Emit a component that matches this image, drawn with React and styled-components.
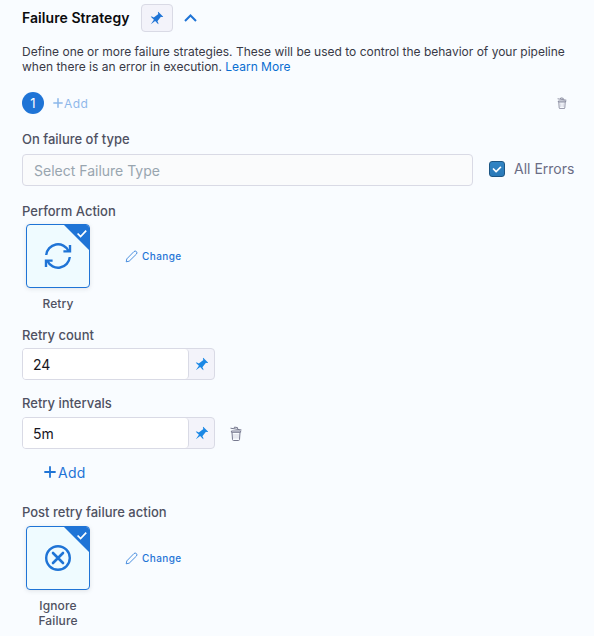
import React from 'react';
import styled, { createGlobalStyle } from 'styled-components';

const GlobalStyle = createGlobalStyle`
  *, *::before, *::after { box-sizing: border-box; }
  body {
    margin: 0;
    background: #fafcff;
    font-family: Inter, "Liberation Sans", sans-serif;
    color: #4f5162;
  }
  button, input { font-family: inherit; }
`;

const Panel = styled.main`
  width: 594px;
  height: 636px;
  overflow: hidden;
  padding: 4px 20px 0 22px;
  background: #f9fcff;
`;

const Header = styled.header`
  display: flex;
  align-items: center;
  height: 28px;
`;

const Title = styled.h2`
  margin: 0;
  width: 119px;
  font-size: 14px;
  line-height: 20px;
  font-weight: 600;
  letter-spacing: 0.06px;
  color: #0b0b0d;
  white-space: nowrap;
`;

const PinButton = styled.button`
  display: flex;
  align-items: center;
  justify-content: center;
  width: 32px;
  height: 28px;
  padding: 0;
  border: 1px solid #d9dae5;
  border-radius: 4px;
  background: #f3f3fa;
  color: #1f74d6;
`;

const Chevron = styled.svg`
  margin-left: 11px;
`;

const Description = styled.p`
  margin: 12px 0 0;
  font-size: 12px;
  line-height: 15px;
  color: #383946;
  white-space: nowrap;
`;

const Link = styled.a`
  color: #0a6ed1;
`;

const StrategyBar = styled.div`
  display: flex;
  align-items: center;
  height: 22px;
  margin-top: 18px;
  padding-right: 7px;
`;

const StepBadge = styled.span`
  width: 22px;
  height: 22px;
  border-radius: 50%;
  background: #1f74d6;
  color: #fff;
  font-size: 13px;
  line-height: 22px;
  text-align: center;
`;

const AddButton = styled.button`
  display: flex;
  align-items: center;
  gap: ${(p) => (p.$large ? 2 : 1)}px;
  margin: ${(p) => (p.$large ? '13px 0 0 22px' : '0 auto 0 9px')};
  padding: 0;
  border: 0;
  background: none;
  height: 20px;
  color: #1f74d6;
  opacity: ${(p) => (p.$large ? 1 : 0.5)};
  font-size: ${(p) => (p.$large ? 14 : 12)}px;
  letter-spacing: ${(p) => (p.$large ? 0.3 : 0.4)}px;
`;

const Label = styled.div`
  margin-top: ${(p) => p.$top}px;
  height: 16px;
  font-size: 13px;
  line-height: 16px;
  font-weight: 500;
  color: #4f5162;
  white-space: nowrap;
`;

const FieldRow = styled.div`
  display: flex;
  align-items: center;
  height: 32px;
  margin-top: ${(p) => p.$top}px;
`;

const TypeSelect = styled.div`
  flex: none;
  width: 451px;
  height: 32px;
  padding-left: 11px;
  border: 1px solid #d9dae5;
  border-radius: 4px;
  background: #fafbfc;
  color: #98a5af;
  font-size: 14px;
  line-height: 32px;
`;

const CheckLabel = styled.label`
  display: flex;
  align-items: center;
  gap: 9px;
  height: 20px;
  margin: -3px 0 0 16px;
  font-size: 14px;
  color: #6b6d85;
  white-space: nowrap;
`;

const CheckBox = styled.span`
  display: flex;
  width: 16px;
  height: 16px;
  border-radius: 3px;
  border: 1px solid #1d5684;
  background: linear-gradient(#3184c4, #2a79b8);
  color: #fff;
`;

const ActionRow = styled.div`
  display: flex;
  margin: ${(p) => p.$top}px 0 0 4px;
`;

const ActionChoice = styled.div`
  display: flex;
  flex-direction: column;
  align-items: center;
  width: 64px;
`;

const ActionTile = styled.div`
  position: relative;
  display: flex;
  align-items: center;
  justify-content: center;
  width: 64px;
  height: 64px;
  overflow: hidden;
  border: 1px solid #1f74d6;
  border-radius: 4px;
  background: #effbff;
  color: #1f74d6;
  box-shadow: 0 1px 4px rgba(96, 97, 112, 0.16);
`;

const Corner = styled.svg`
  position: absolute;
  top: -1px;
  right: -1px;
`;

const ActionName = styled.div`
  margin-top: 8px;
  font-size: 12px;
  line-height: 15px;
  font-weight: 500;
  letter-spacing: 0.12px;
  text-align: center;
`;

const ChangeButton = styled.button`
  display: flex;
  align-items: center;
  gap: 4px;
  height: 16px;
  margin: 24px 0 0 35px;
  padding: 0;
  border: 0;
  background: none;
  color: #1f74d6;
  font-size: 10px;
  font-weight: 500;
  letter-spacing: 0.4px;
`;

const InputGroup = styled.div`
  display: flex;
  width: 193px;
  height: 32px;
  border: 1px solid #d9dae5;
  border-radius: 4px;
  background: #f3f3fa;
  overflow: hidden;
`;

const TextInput = styled.input`
  width: 166px;
  height: 30px;
  padding: 1px 10px 0;
  border: 0;
  border-right: 1px solid #d9dae5;
  border-radius: 0 4px 4px 0;
  outline: none;
  background: #fff;
  color: #16161d;
  font-size: 14px;
`;

const InputPin = styled.span`
  display: flex;
  align-items: center;
  justify-content: center;
  width: 25px;
  padding: 0 0 1px 1px;
  color: #1b88e5;
`;

const IconButton = styled.button`
  display: flex;
  margin-left: ${(p) => p.$left || 0}px;
  padding: 0;
  border: 0;
  background: none;
  color: #77798f;
`;

const PinIcon = ({ size = 12 }) => (
  <svg width={size} height={size} viewBox="0 0 16 16" fill="currentColor">
    <path d="M9.41.92c-.51.51-.41 1.5.15 2.56L4.34 7.54C2.8 6.48 1.45 6.05.92 6.58l3.54 3.54-3.54 4.95 4.95-3.54 3.54 3.54c.53-.53.1-1.88-.96-3.42l4.06-5.22c1.06.56 2.04.66 2.55.15L9.41.92z" />
  </svg>
);

const PlusIcon = ({ size }) => (
  <svg width={size} height={size} viewBox="0 0 12 12" stroke="currentColor" strokeWidth="1.8" strokeLinecap="round">
    <path d="M6 1v10M1 6h10" />
  </svg>
);

const TrashIcon = ({ width, height }) => (
  <svg width={width} height={height} viewBox="0 0 12 15" fill="none" stroke="currentColor" strokeLinejoin="round">
    <path d="M.5 2.2 11.5 4M4 2.5l.5-1.4 3 .5.2 1.5" />
    <path d="M1.4 5h9.2v1.3H1.4zM2 6.5l.5 7.1q.1.9 1 .9h5q.9 0 1-.9l.5-7.1" />
    <path d="M4 8v4.6M6 8v4.6M8 8v4.6" stroke="#d3d4df" />
  </svg>
);

const PencilIcon = () => (
  <svg width="13" height="13" viewBox="0 0 13 13" fill="none" stroke="currentColor" strokeWidth=".8" strokeLinejoin="round">
    <path d="M1.2 11.8 1.8 8.9 9 1.5Q10.2.5 11.4 1.6 12.5 2.8 11.5 4L4.2 11.2Z" />
  </svg>
);

const RetryIcon = () => (
  <svg width="28" height="28" viewBox="0 0 28 28" fill="none" stroke="currentColor" strokeWidth="2.4">
    <path d="M2.2 13A11.8 11.8 0 0 1 24.6 9M25.8 15A11.8 11.8 0 0 1 3.4 19" />
    <path d="M26 3v6.4h-6.6M2 25v-6.4h6.6" />
  </svg>
);

const IgnoreIcon = () => (
  <svg width="28" height="28" viewBox="0 0 28 28" fill="none" stroke="currentColor">
    <circle cx="14" cy="14" r="11.8" strokeWidth="2.4" />
    <path d="M9 9l10 10M19 9 9 19" strokeWidth="2.6" strokeLinecap="round" />
  </svg>
);

const SelectedCorner = () => (
  <Corner width="27" height="27" viewBox="0 0 27 27">
    <path d="M0 0h27v27z" fill="#1f74d6" />
    <path d="M14.6 9.5l3 3 5.6-5.8" fill="none" stroke="#fff" strokeWidth="1.7" />
  </Corner>
);

const Action = ({ top, icon, name }) => (
  <ActionRow $top={top}>
    <ActionChoice>
      <ActionTile>
        {icon}
        <SelectedCorner />
      </ActionTile>
      <ActionName>{name}</ActionName>
    </ActionChoice>
    <ChangeButton>
      <PencilIcon />
      Change
    </ChangeButton>
  </ActionRow>
);

const PinnedInput = ({ value }) => (
  <InputGroup>
    <TextInput defaultValue={value} />
    <InputPin>
      <PinIcon size={14} />
    </InputPin>
  </InputGroup>
);

export default function App() {
  return (
    <Panel>
      <GlobalStyle />
      <Header>
        <Title>Failure Strategy</Title>
        <PinButton><PinIcon size={14} /></PinButton>
        <Chevron width="13" height="8" viewBox="0 0 13 8" fill="none" stroke="#1f74d6" strokeWidth="2">
          <path d="M1 7l5.5-5.5L12 7" />
        </Chevron>
      </Header>
      <Description>
        Define one or more failure strategies. These will be used to control the behavior of your pipeline
        <br />
        when there is an error in execution. <Link>Learn More</Link>
      </Description>
      <StrategyBar>
        <StepBadge>1</StepBadge>
        <AddButton><PlusIcon size={10} />Add</AddButton>
        <IconButton><TrashIcon width={10} height={12} /></IconButton>
      </StrategyBar>

      <Label $top={17}>On failure of type</Label>
      <FieldRow $top={7}>
        <TypeSelect>Select Failure Type</TypeSelect>
        <CheckLabel>
          <CheckBox>
            <svg width="14" height="14" viewBox="0 0 16 16" fill="currentColor">
              <path d="M12 5c-.28 0-.53.11-.71.29L7 9.59l-2.29-2.3a1.003 1.003 0 00-1.42 1.42l3 3c.18.18.43.29.71.29s.53-.11.71-.29l5-5A1.003 1.003 0 0012 5z" />
            </svg>
          </CheckBox>
          All Errors
        </CheckLabel>
      </FieldRow>

      <Label $top={17}>Perform Action</Label>
      <Action top={5} icon={<RetryIcon />} name="Retry" />

      <Label $top={16}>Retry count</Label>
      <FieldRow $top={5}><PinnedInput value="24" /></FieldRow>

      <Label $top={15}>Retry intervals</Label>
      <FieldRow $top={6}>
        <PinnedInput value="5m" />
        <IconButton $left={15}><TrashIcon width={12} height={15} /></IconButton>
      </FieldRow>
      <AddButton $large><PlusIcon size={12} />Add</AddButton>

      <Label $top={22}>Post retry failure action</Label>
      <Action top={6} icon={<IgnoreIcon />} name={<>Ignore<br />Failure</>} />
    </Panel>
  );
}
